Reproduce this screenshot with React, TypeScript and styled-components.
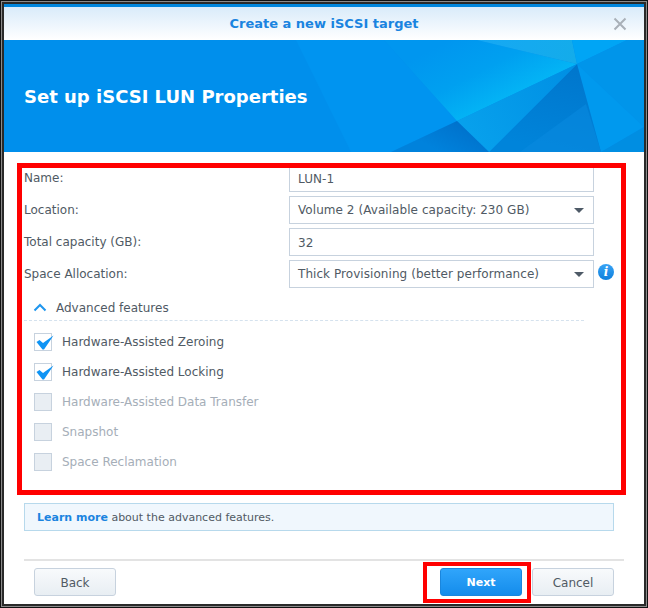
import React from "react";
import styled, { createGlobalStyle } from "styled-components";

const Global = createGlobalStyle`
  html, body { margin: 0; padding: 0; background: #fff; }
  body { font-family: "DejaVu Sans", Verdana, sans-serif; }
  * { box-sizing: border-box; }
`;

const Frame = styled.div`
  position: relative;
  width: 648px;
  height: 608px;
  border: 1px solid #111;
  background: #8a8a8a;
  padding: 1px;
`;
const FrameInner = styled.div`
  width: 100%;
  height: 100%;
  border: 2px solid #2a2a2a;
  background: #fff;
  display: flex;
  flex-direction: column;
  overflow: hidden;
`;
const TitleBar = styled.div`
  flex: 0 0 36px;
  border-top: 3px solid #0086dd;
  background: linear-gradient(#d9ebfa, #ffffff);
  display: flex;
  align-items: center;
  justify-content: center;
  position: relative;
  font-size: 13px;
  font-weight: bold;
  color: #1a84e0;
`;
const CloseIcon = styled.svg`
  position: absolute;
  right: 17px;
  top: 10px;
  width: 14px;
  height: 14px;
`;
const Banner = styled.div`
  flex: 0 0 112px;
  position: relative;
  background: #008fec;
  display: flex;
  align-items: center;
  padding-left: 20px;
  overflow: hidden;
`;
const BannerArt = styled.svg`
  position: absolute;
  inset: 0;
  width: 100%;
  height: 100%;
`;
const BannerTitle = styled.h1`
  position: relative;
  margin: 0;
  font-size: 18px;
  font-weight: bold;
  color: #fff;
`;
const Body = styled.div`
  flex: 1;
  display: flex;
  flex-direction: column;
  padding: 12px 20px 0 20px;
`;
const FormRow = styled.div`
  display: grid;
  grid-template-columns: 265px 305px;
  align-items: start;
  height: 32px;
  position: relative;
  font-size: 12px;
  color: #505a64;
`;
const Label = styled.div`
  line-height: 28px;
`;
const Field = styled.div<{ $select?: boolean }>`
  height: 28px;
  border: 1px solid #c7d2de;
  background: #fff;
  padding: ${(p) => (p.$select ? "0" : "1px")} 0 0 8px;
  font-size: 12px;
  letter-spacing: 0.06px;
  color: #505a64;
  display: flex;
  align-items: center;
  justify-content: space-between;
`;
const Caret = styled.span`
  width: 0;
  height: 0;
  margin: 0 9px 0 0;
  border-left: 5px solid transparent;
  border-right: 5px solid transparent;
  border-top: 5px solid #4e5a67;
`;
const InfoBadge = styled.span`
  position: absolute;
  left: 574px;
  top: 4px;
  width: 16px;
  height: 16px;
  border-radius: 50%;
  background: linear-gradient(#38a3f5, #0e7fdc);
  color: #fff;
  font: italic bold 12px/16px "DejaVu Serif", serif;
  text-align: center;
`;
const AdvancedHeader = styled.div`
  display: flex;
  align-items: center;
  gap: 9px;
  padding: 3px 0 0 9px;
  height: 29px;
  width: 560px;
  border-bottom: 1px dashed #d5e2ee;
  font-size: 12px;
  color: #505a64;
`;
const CheckList = styled.div`
  display: flex;
  flex-direction: column;
  gap: 12px;
  padding: 12px 0 0 10px;
`;
const CheckRow = styled.div<{ $disabled?: boolean }>`
  display: flex;
  align-items: center;
  gap: 10px;
  height: 18px;
  font-size: 12px;
  color: ${(p) => (p.$disabled ? "#a5aeb8" : "#505a64")};
`;
const Box = styled.span<{ $disabled?: boolean }>`
  position: relative;
  width: 18px;
  height: 18px;
  border: 1px solid #c7d2de;
  background: ${(p) => (p.$disabled ? "#e9eef3" : "#fff")};
`;
const Tick = styled.svg`
  position: absolute;
  left: 1px;
  top: -2px;
  width: 19px;
  height: 20px;
`;
const Notice = styled.div`
  margin-top: 32px;
  height: 28px;
  width: 590px;
  border: 1px solid #b7d9ec;
  background: #f0f7fd;
  padding-left: 12px;
  font-size: 11px;
  line-height: 27px;
  color: #505a64;
`;
const LearnMore = styled.a`
  font-weight: bold;
  color: #1a84e0;
`;
const Footer = styled.div`
  margin-top: 28px;
  width: 600px;
  height: 45px;
  border-top: 2px solid #e3e3e3;
  display: flex;
  align-items: flex-start;
  padding: 7px 10px 0 10px;
`;
const Button = styled.button<{ $primary?: boolean }>`
  width: 82px;
  height: 28px;
  border-radius: 3px;
  border: 1px solid ${(p) => (p.$primary ? "#1a86dd" : "#c7d2de")};
  background: ${(p) => (p.$primary ? "linear-gradient(#30a5fb, #148ceb)" : "linear-gradient(#f8fafc, #e8eef3)")};
  color: ${(p) => (p.$primary ? "#fff" : "#505a64")};
  font-family: inherit;
  font-size: ${(p) => (p.$primary ? "11px" : "12px")};
  font-weight: ${(p) => (p.$primary ? "bold" : "normal")};
  padding: 1px 0 0;
`;
const Spacer = styled.div`
  flex: 1;
`;
const FooterGap = styled.div`
  width: 10px;
`;
const RedBox = styled.div<{ $l: number; $t: number; $w: number; $h: number; $b: number }>`
  position: absolute;
  left: ${(p) => p.$l}px;
  top: ${(p) => p.$t}px;
  width: ${(p) => p.$w}px;
  height: ${(p) => p.$h}px;
  border: ${(p) => p.$b}px solid #f00;
  pointer-events: none;
`;

const fields: { label: string; value: string; select?: boolean; info?: boolean }[] = [
  { label: "Name:", value: "LUN-1" },
  { label: "Location:", value: "Volume 2 (Available capacity: 230 GB)", select: true },
  { label: "Total capacity (GB):", value: "32" },
  { label: "Space Allocation:", value: "Thick Provisioning (better performance)", select: true, info: true },
];
const checks = [
  { label: "Hardware-Assisted Zeroing", on: true },
  { label: "Hardware-Assisted Locking", on: true },
  { label: "Hardware-Assisted Data Transfer" },
  { label: "Snapshot" },
  { label: "Space Reclamation" },
];

export default function App() {
  return (
    <Frame>
      <Global />
      <FrameInner>
        <TitleBar>
          Create a new iSCSI target
          <CloseIcon viewBox="0 0 14 14">
            <path d="M1.5 1.5 12.5 12.5M12.5 1.5 1.5 12.5" stroke="#a9b0b8" strokeWidth="2" fill="none" />
          </CloseIcon>
        </TitleBar>
        <Banner>
          {/* viewBox is in page coordinates */}
          <BannerArt viewBox="4 40 640 112" preserveAspectRatio="none">
            <defs>
              <linearGradient id="mid" gradientUnits="userSpaceOnUse" x1="430" y1="50" x2="468" y2="125">
                <stop offset="0" stopColor="#0096ef" />
                <stop offset="0.5" stopColor="#00a0f0" />
                <stop offset="1" stopColor="#04b7f6" />
              </linearGradient>
              <linearGradient id="dark" gradientUnits="userSpaceOnUse" x1="577" y1="64" x2="555" y2="152">
                <stop offset="0" stopColor="#0076cc" />
                <stop offset="1" stopColor="#0084da" />
              </linearGradient>
              <linearGradient id="low" gradientUnits="userSpaceOnUse" x1="457" y1="121" x2="440" y2="152">
                <stop offset="0" stopColor="#0072cc" />
                <stop offset="1" stopColor="#0082dc" />
              </linearGradient>
              <linearGradient id="wedge" gradientUnits="userSpaceOnUse" x1="470" y1="130" x2="570" y2="70">
                <stop offset="0" stopColor="#07a0ec" />
                <stop offset="1" stopColor="#0090e4" />
              </linearGradient>
              <linearGradient id="sliver" gradientUnits="userSpaceOnUse" x1="480" y1="40" x2="575" y2="60">
                <stop offset="0" stopColor="#16a8f4" />
                <stop offset="1" stopColor="#14acea" />
              </linearGradient>
            </defs>
            <polygon points="296,40 384,40 457,121 391,152 351,152" fill="#0094f0" />
            <polygon points="384,40 477,40 577,64 457,121" fill="url(#mid)" />
            <polygon points="477,40 572,40 577,64" fill="url(#sliver)" />
            <polygon points="572,40 627,40 577,64" fill="#00a5f5" />
            <polygon points="627,40 644,40 644,127 577,64" fill="#0095ea" />
            <polygon points="577,64 644,127 601,152" fill="#0099ee" />
            <polygon points="644,127 644,152 601,152" fill="#008ee2" />
            <polygon points="577,64 601,152 489,152" fill="url(#dark)" />
            <polygon points="520,152 601,152 586,104" fill="#0a8ae0" opacity="0.55" />
            <polygon points="577,64 489,152 457,121" fill="url(#wedge)" />
            <polygon points="457,121 489,152 391,152" fill="url(#low)" />
          </BannerArt>
          <BannerTitle>Set up iSCSI LUN Properties</BannerTitle>
        </Banner>
        <Body>
          {fields.map((f) => (
            <FormRow key={f.label}>
              <Label>{f.label}</Label>
              <Field $select={f.select}>
                {f.value}
                {f.select && <Caret />}
              </Field>
              {f.info && <InfoBadge>i</InfoBadge>}
            </FormRow>
          ))}
          <AdvancedHeader>
            <svg width="14" height="9" viewBox="0 0 14 9">
              <path d="M1.5 7.5 7 2l5.5 5.5" stroke="#1f96ee" strokeWidth="2" fill="none" />
            </svg>
            Advanced features
          </AdvancedHeader>
          <CheckList>
            {checks.map((c) => (
              <CheckRow key={c.label} $disabled={!c.on}>
                <Box $disabled={!c.on}>
                  {c.on && (
                    <Tick viewBox="0 0 19 20">
                      <path d="M0.5 10 L3.5 8 L7 11 L17.5 3.5 L8 17.5 L6.5 17.5 Z" fill="#0f94f4" />
                    </Tick>
                  )}
                </Box>
                {c.label}
              </CheckRow>
            ))}
          </CheckList>
          <Notice>
            <LearnMore>Learn more</LearnMore> about the advanced features.
          </Notice>
          <Footer>
            <Button>Back</Button>
            <Spacer />
            <Button $primary>Next</Button>
            <FooterGap />
            <Button>Cancel</Button>
          </Footer>
        </Body>
      </FrameInner>
      <RedBox $l={16} $t={162} $w={609} $h={332} $b={5} />
      <RedBox $l={422} $t={561} $w={108} $h={41} $b={4} />
    </Frame>
  );
}
